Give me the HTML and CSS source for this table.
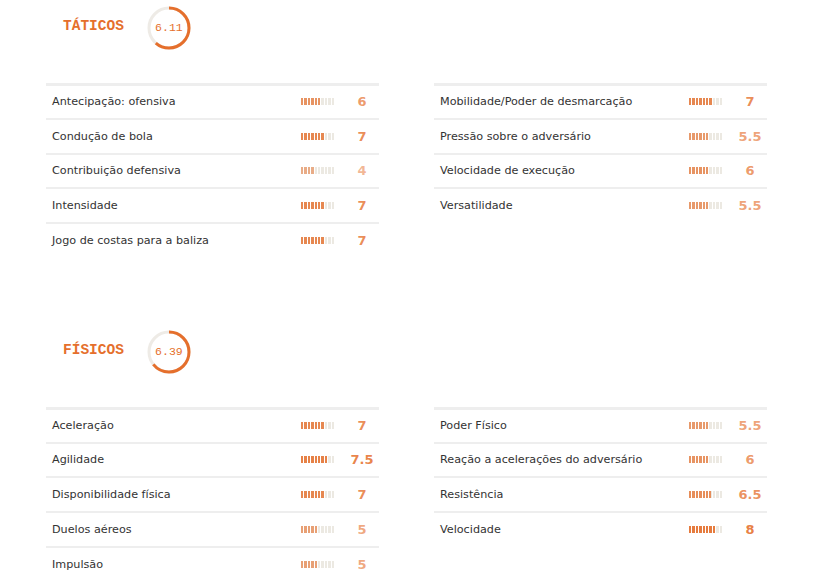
FILE: index.html
```html
<!DOCTYPE html>
<html lang="pt">
<head>
    <meta charset="UTF-8">
    <meta name="viewport" content="width=device-width, initial-scale=1.0">
    <title>Atributos</title>
    <link rel="stylesheet" href="styles.css">
</head>
<body>
    <div class="page">
        <section class="group" data-score="6.11">
            <div class="group-header">
                <h2>TÁTICOS</h2>
                <div class="score-ring"></div>
            </div>
            <div class="columns">
                <div class="attr-list" data-items="Antecipação: ofensiva|6;Condução de bola|7;Contribuição defensiva|4;Intensidade|7;Jogo de costas para a baliza|7"></div>
                <div class="attr-list" data-items="Mobilidade/Poder de desmarcação|7;Pressão sobre o adversário|5.5;Velocidade de execução|6;Versatilidade|5.5"></div>
            </div>
        </section>

        <section class="group" data-score="6.39">
            <div class="group-header">
                <h2>FÍSICOS</h2>
                <div class="score-ring"></div>
            </div>
            <div class="columns">
                <div class="attr-list" data-items="Aceleração|7;Agilidade|7.5;Disponibilidade física|7;Duelos aéreos|5;Impulsão|5"></div>
                <div class="attr-list" data-items="Poder Físico|5.5;Reação a acelerações do adversário|6;Resistência|6.5;Velocidade|8"></div>
            </div>
        </section>
    </div>

    <script>
        function ratingColor(value) {
            const alpha = Math.min(1, value / 10 + 0.1);
            return `rgba(229, 111, 44, ${alpha.toFixed(2)})`;
        }

        function buildRing(el, score) {
            const r = 20;
            const len = 2 * Math.PI * r;
            const arc = len * score / 10;
            el.innerHTML = `
                <svg width="44" height="44" viewBox="0 0 44 44">
                    <circle cx="22" cy="22" r="${r}" fill="none" stroke="#eeebe6" stroke-width="3"/>
                    <circle cx="22" cy="22" r="${r}" fill="none" stroke="#e56f2c" stroke-width="3"
                        stroke-dasharray="${arc.toFixed(2)} ${len.toFixed(2)}" transform="rotate(-90 22 22)"/>
                </svg>
                <span class="score-value">${score}</span>
            `;
        }

        function buildList(el) {
            el.dataset.items.split(';').forEach(entry => {
                const [label, raw] = entry.split('|');
                const value = parseFloat(raw);
                const color = ratingColor(value);
                const row = document.createElement('div');
                row.className = 'attr-row';
                row.innerHTML = `
                    <span class="attr-label">${label}</span>
                    <span class="attr-bar"><span class="attr-fill" style="width: ${(value * 3.4).toFixed(1)}px; color: ${color}"></span></span>
                    <span class="attr-value" style="color: ${color}">${raw}</span>
                `;
                el.appendChild(row);
            });
        }

        document.querySelectorAll('.group').forEach(group => {
            buildRing(group.querySelector('.score-ring'), group.dataset.score);
        });
        document.querySelectorAll('.attr-list').forEach(buildList);
    </script>
</body>
</html>
```

FILE: styles.css
```css
/* Global styles */
body {
    margin: 0;
    background-color: #ffffff;
    color: #333333;
    font-family: "DejaVu Sans", Verdana, sans-serif;
}
.page {
    width: 721px;
    margin-left: 46px;
    padding-top: 6px;
}
.group {
    margin-bottom: 73px;
}
.group-header {
    display: flex;
    align-items: center;
    gap: 23px;
    padding-left: 17px;
    height: 44px;
    margin-bottom: 33px;
}
h2 {
    margin: 0;
    font-family: "Liberation Mono", "Courier New", monospace;
    font-size: 14.5px;
    font-weight: bold;
    color: #e56f2c;
    position: relative;
    top: -2px;
}
.score-ring {
    position: relative;
    width: 44px;
    height: 44px;
}
.score-ring svg {
    display: block;
}
.score-value {
    position: absolute;
    left: 0;
    right: 0;
    top: 15px;
    text-align: center;
    font-family: "Liberation Mono", "Courier New", monospace;
    font-size: 11.5px;
    color: #e56f2c;
}
.columns {
    display: grid;
    grid-template-columns: 333px 333px;
    column-gap: 55px;
}
/* Attribute rows */
.attr-row {
    display: flex;
    align-items: center;
    height: 32.75px;
    border-top: 2px solid #eeeeee;
    padding-left: 6px;
}
.attr-row:first-child {
    border-top-width: 3px;
    height: 31.75px;
}
.attr-label {
    flex: 1;
    font-size: 11.2px;
    color: #333333;
}
.attr-bar {
    display: block;
    width: 34px;
    height: 7px;
    margin-right: 4px;
    background: repeating-linear-gradient(90deg, #ece9e2 0 2.4px, transparent 2.4px 3.4px);
}
.attr-fill {
    display: block;
    height: 100%;
    background: repeating-linear-gradient(90deg, currentColor 0 2.4px, transparent 2.4px 3.4px);
}
.attr-value {
    width: 46px;
    text-align: center;
    font-size: 13px;
    font-weight: bold;
    margin-right: -6px;
}
```
